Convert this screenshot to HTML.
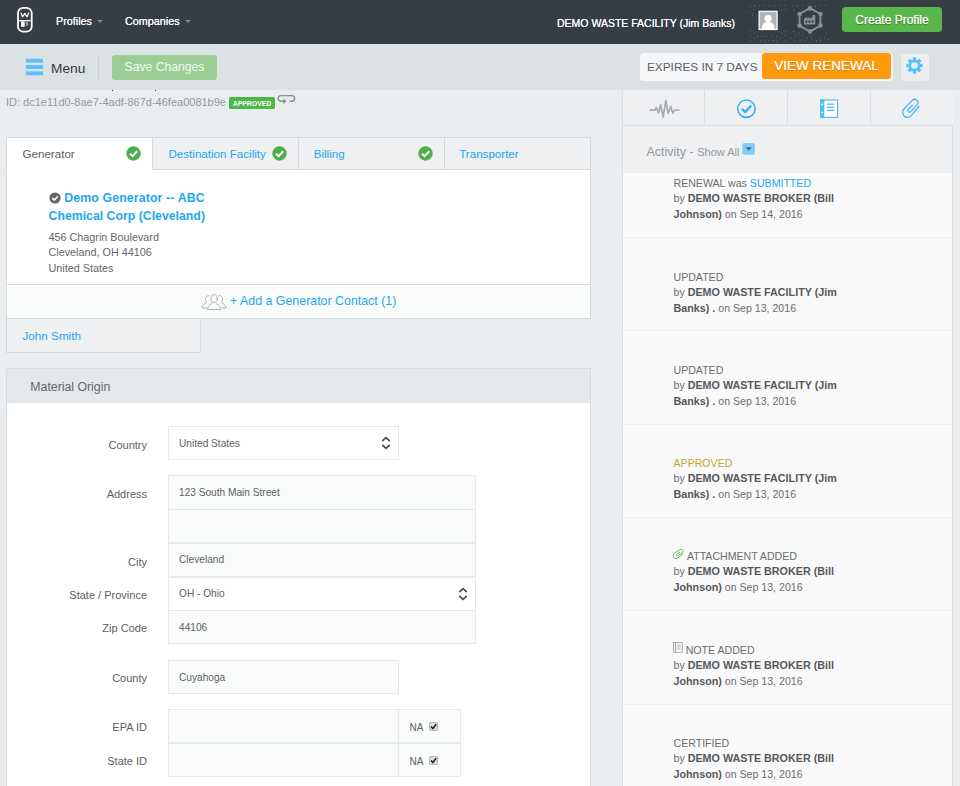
<!DOCTYPE html>
<html lang="en">
<head>
<meta charset="utf-8">
<title>Profile</title>
<style>
*{box-sizing:border-box;margin:0;padding:0}
html,body{width:960px;height:786px;overflow:hidden}
body{background:#e9edf0;font-family:"Liberation Sans",Arial,sans-serif;font-size:12px;color:#5a5f63;position:relative}
.abs{position:absolute}
a{color:#22a7f0;text-decoration:none}
/* top nav */
#nav{position:absolute;left:0;top:0;width:960px;height:44px;background:#363d45}
#nav .item{position:absolute;top:14px;color:#fff;font-size:10.8px;line-height:14px;text-shadow:0 0 0.6px #fff;white-space:nowrap}
#nav .caret{display:inline-block;width:0;height:0;border-left:3px solid transparent;border-right:3px solid transparent;border-top:3px solid #7d858b;margin-left:5px;vertical-align:2px}
#create{position:absolute;left:842px;top:7px;width:100px;height:25px;background:#58b64a;border-radius:3.500px;color:#fff;font-size:12px;line-height:26px;text-align:center;text-shadow:0 1px 1px rgba(0,0,0,0.3),0 0 0.6px #fff}
/* toolbar */
#bar{position:absolute;left:0;top:44px;width:960px;height:46px;background:#dce1e4}
#menu{position:absolute;left:51px;top:16px;font-size:13.7px;line-height:17px;color:#33383c}
#save{position:absolute;left:112px;top:11px;width:105px;height:25px;background:#9bce93;border-radius:3px;color:#f4f9f3;font-size:12.2px;line-height:25.500px;text-align:center}
#exp{position:absolute;left:639.500px;top:9px;width:253px;height:28px;background:#f5f6f7;border-radius:4px}
#exp span{position:absolute;left:7.500px;top:7px;font-size:11.8px;line-height:14px;color:#5b6063;white-space:nowrap}
#view{position:absolute;left:762px;top:53px;width:129px;height:26px;background:#ff9a0d;border-radius:3px;color:#fff;font-size:13.5px;line-height:26.200px;text-align:center;text-shadow:0 1px 1px rgba(0,0,0,0.2),0 0 0.6px #fff}
#gear{position:absolute;left:901px;top:53.500px;width:28px;height:27px;background:#ecedee;border-radius:2px}
/* left */
#idline{position:absolute;left:6px;top:96px;font-size:11px;line-height:13px;color:#999;white-space:nowrap}
.badge{position:absolute;left:229px;top:97.300px;width:46px;height:11.600px;background:#4db748;border-radius:1.500px;color:#fff;font-size:6.9px;font-weight:bold;line-height:13.200px;text-align:center}
.panel{position:absolute;background:#fff;border:1px solid #d6dadd}
.tab{position:absolute;top:137px;height:33px;width:147px;background:#eef0f2;border:1px solid #d6dadd;font-size:11.6px;line-height:14px;padding:9.200px 0 0 15.500px;color:#22a7f0}
.tab.on{background:#fff;border-bottom-color:#fff;color:#5a5f63}
.chk{position:absolute;top:8px;width:15px;height:15px}
h3{position:absolute;left:48.500px;top:190px;font-size:12.3px;line-height:17.5px;font-weight:bold;color:#22a7f0;white-space:nowrap}
.addr{position:absolute;left:48.500px;top:230px;font-size:10.8px;line-height:15.3px;color:#63676a;white-space:nowrap}
#addc{position:absolute;left:6px;top:284px;width:585px;height:35px;background:#fafcfc;border:1px solid #d6dadd}
#addc span{position:absolute;left:223px;top:8.500px;font-size:12.4px;line-height:15px;color:#22a7f0;white-space:nowrap}
#john{position:absolute;left:6px;top:319px;width:195px;height:33.500px;background:#eef0f2;border:1px solid #d6dadd;border-top:none;font-size:11.7px;line-height:14px;padding:9.700px 0 0 15.500px;color:#22a7f0}
#mo{position:absolute;left:6px;top:368px;width:585px;height:430px;background:#fff;border:1px solid #d9dcdf}
#mo .hd{height:34px;background:#e4e8ea;font-size:12.3px;line-height:15px;padding:11px 0 0 23.300px;color:#63676a}
.lbl{position:absolute;left:20px;width:127px;text-align:right;font-size:11px;line-height:13px;color:#5a5f63;white-space:nowrap}
.inp{position:absolute;left:168px;height:34px;background:#fafcfc;border:1px solid #e6e9eb;font-size:10.15px;line-height:12px;padding:10.700px 0 0 10px;color:#5a5f63;white-space:nowrap}
.inp.sel{background:#fff}
.na{position:absolute;left:398px;width:63px;height:34px;background:#fafcfc;border:1px solid #e6e9eb;font-size:10px;line-height:12px;padding:11.600px 0 0 10.600px;color:#5a5f63}
.cb{position:absolute;left:31px;top:12px;width:8px;height:8px;border:1px solid #9a9a9a;border-radius:1.5px;background:#f2f2f2}
/* right */
#rp{position:absolute;left:622px;top:90px;width:331px;height:700px;background:#f9f9f9;border-left:1px solid #dcdfe2;border-right:1px solid #d9dcdf}
.rt{position:absolute;top:90px;height:36px;background:#eff0f2;border:1px solid #dcdfe2;border-top:none}
#act{position:absolute;left:623px;top:125px;width:329px;height:48px;background:#eef0f2;border-top:1px solid #dde0e3}
#act span.a{position:absolute;left:23.500px;top:19px;font-size:12.5px;line-height:14px;color:#94989b;white-space:nowrap}
.it{position:absolute;left:673.500px;font-size:10.6px;line-height:15.4px;color:#6a6d70;white-space:nowrap;margin-top:0.8px}
.it b{color:#55585b;font-size:10.75px}
.sep{position:absolute;left:623px;width:329px;height:1px;background:#eceef0}
</style>
</head>
<body>
<div id="nav">
  <svg class="abs" style="left:17px;top:6.500px" width="16" height="26" viewBox="0 0 16 26"><rect x="1" y="0.900" width="13.700" height="23.800" rx="5.200" fill="none" stroke="#fff" stroke-width="1.800"/><path d="M3.900 5.600 L5.500 9.800 L7.800 6.300 L10.100 9.800 L11.800 5.600" fill="none" stroke="#fff" stroke-width="1.200" stroke-linejoin="round"/><path d="M2 13.700 H13.700" stroke="#fff" stroke-width="1.300"/><rect x="4.100" y="14.200" width="3.600" height="5.700" rx="0.600" fill="#fff"/><rect x="8.700" y="14.800" width="2.300" height="4" fill="#9ba0a4"/></svg>
  <div class="item" style="left:56px">Profiles<i class="caret"></i></div>
  <div class="item" style="left:125px">Companies<i class="caret"></i></div>
  <div class="item" style="left:557px;top:16px;font-size:10.5px">DEMO WASTE FACILITY (Jim Banks)</div>
  <svg class="abs" style="left:758px;top:10px" width="21" height="21" viewBox="0 0 21 21"><rect x="1.100" y="1.300" width="18" height="18.200" fill="#b4b5b6" stroke="#fff" stroke-width="1.200"/><circle cx="10.100" cy="8.600" r="3.600" fill="#fff"/><path d="M3.800 19 C3.800 13.500 6.500 12 10.100 12 C13.700 12 16.400 13.500 16.400 19 Z" fill="#fff"/></svg>
  <svg class="abs" style="left:796px;top:6px" width="28" height="28" viewBox="0 0 28 28"><g fill="none" stroke="#8b8f92" stroke-width="1.900"><polygon points="14,2.200 24.400,8 24.400,19.600 14,25.600 3.600,19.600 3.600,8"/></g><g fill="#8b8f92"><circle cx="14" cy="2.400" r="2.300"/><circle cx="24.400" cy="8" r="2.300"/><circle cx="24.400" cy="19.600" r="2.300"/><circle cx="14" cy="25.400" r="2.300"/><circle cx="3.600" cy="19.600" r="2.300"/><circle cx="3.600" cy="8" r="2.300"/><path d="M8 18.500 V12.500 L11 11.200 V12.500 L14 11.200 V12.500 L16.500 11.200 V9 H19.200 V18.500 Z"/></g><g fill="#343b41"><rect x="9.500" y="14.500" width="1.700" height="2.200"/><rect x="12.600" y="14.500" width="1.700" height="2.200"/><rect x="15.700" y="14.500" width="1.700" height="2.200"/></g></svg>
  <svg class="abs" style="left:0;top:0" width="960" height="44" viewBox="0 0 960 44"><g fill="#66645f"><rect x="753.9" y="4.9" width="1.100" height="1.100"/><rect x="759.0" y="4.9" width="1.100" height="1.100"/><rect x="764.0" y="4.9" width="1.100" height="1.100"/><rect x="769.1" y="4.9" width="1.100" height="1.100"/><rect x="774.0" y="4.9" width="1.100" height="1.100"/><rect x="779.0" y="4.9" width="1.100" height="1.100"/><rect x="783.9" y="4.9" width="1.100" height="1.100"/><rect x="797.0" y="4.9" width="1.100" height="1.100"/><rect x="801.9" y="4.9" width="1.100" height="1.100"/><rect x="819.9" y="4.9" width="1.100" height="1.100"/><rect x="824.9" y="4.9" width="1.100" height="1.100"/><rect x="749.9" y="5.9" width="1.100" height="1.100"/><rect x="791.8" y="5.9" width="1.100" height="1.100"/><rect x="814.8" y="5.9" width="1.100" height="1.100"/><rect x="752.9" y="8.9" width="1.100" height="1.100"/><rect x="785.0" y="8.9" width="1.100" height="1.100"/><rect x="781.1" y="9.8" width="1.100" height="1.100"/><rect x="793.9" y="9.8" width="1.100" height="1.100"/><rect x="749.0" y="10.9" width="1.100" height="1.100"/><rect x="752.0" y="14.7" width="1.100" height="1.100"/><rect x="749.9" y="30.0" width="1.100" height="1.100"/><rect x="753.9" y="32.8" width="1.100" height="1.100"/><rect x="781.1" y="32.8" width="1.100" height="1.100"/><rect x="798.9" y="32.8" width="1.100" height="1.100"/><rect x="826.0" y="32.8" width="1.100" height="1.100"/><rect x="785.0" y="30.9" width="1.100" height="1.100"/><rect x="793.0" y="30.9" width="1.100" height="1.100"/><rect x="749.9" y="34.9" width="1.100" height="1.100"/><rect x="783.9" y="34.9" width="1.100" height="1.100"/><rect x="801.9" y="34.9" width="1.100" height="1.100"/><rect x="795.1" y="34.9" width="1.100" height="1.100"/><rect x="756.9" y="35.9" width="1.100" height="1.100"/><rect x="761.8" y="35.9" width="1.100" height="1.100"/><rect x="766.1" y="35.9" width="1.100" height="1.100"/><rect x="771.0" y="35.9" width="1.100" height="1.100"/><rect x="775.9" y="35.9" width="1.100" height="1.100"/><rect x="753.9" y="37.5" width="1.100" height="1.100"/><rect x="779.9" y="37.5" width="1.100" height="1.100"/><rect x="790.9" y="37.5" width="1.100" height="1.100"/><rect x="806.8" y="37.5" width="1.100" height="1.100"/><rect x="810.9" y="37.5" width="1.100" height="1.100"/><rect x="819.9" y="37.5" width="1.100" height="1.100"/><rect x="824.0" y="37.5" width="1.100" height="1.100"/><rect x="749.9" y="39.8" width="1.100" height="1.100"/><rect x="760.0" y="39.8" width="1.100" height="1.100"/><rect x="767.9" y="39.8" width="1.100" height="1.100"/><rect x="773.1" y="39.8" width="1.100" height="1.100"/><rect x="785.0" y="39.8" width="1.100" height="1.100"/><rect x="793.9" y="39.8" width="1.100" height="1.100"/><rect x="799.8" y="39.8" width="1.100" height="1.100"/><rect x="803.8" y="39.8" width="1.100" height="1.100"/><rect x="815.9" y="39.8" width="1.100" height="1.100"/><rect x="819.9" y="39.8" width="1.100" height="1.100"/><rect x="827.0" y="38.9" width="1.100" height="1.100"/><rect x="764.0" y="40.7" width="1.100" height="1.100"/><rect x="776.8" y="40.7" width="1.100" height="1.100"/><rect x="815.9" y="40.7" width="1.100" height="1.100"/><rect x="756.9" y="41.9" width="1.100" height="1.100"/><rect x="776.8" y="41.9" width="1.100" height="1.100"/><rect x="809.0" y="41.9" width="1.100" height="1.100"/></g></svg>
  <div id="create">Create Profile</div>
</div>
<div id="bar">
  <svg class="abs" style="left:25.600px;top:14.400px" width="17.500" height="18" viewBox="0 0 18 18"><rect x="0" y="0.500" width="18" height="4" fill="#5bc0fa"/><rect x="0" y="7" width="18" height="4" fill="#5bc0fa"/><rect x="0" y="13.500" width="18" height="4" fill="#5bc0fa"/></svg>
  <div id="menu">Menu</div>
  <div class="abs" style="left:98px;top:12px;width:1px;height:24px;background:#c9ced2"></div>
  <div id="save">Save Changes</div>
  <div id="exp"><span>EXPIRES IN 7 DAYS</span></div>
</div>
<div id="view">VIEW RENEWAL</div>
<div id="gear"><svg class="abs" style="left:5.400px;top:3px" width="17" height="17" viewBox="0 0 16 16"><g fill="#5cc0fb"><circle cx="8" cy="8" r="5.700"/><rect x="6.400" y="0.300" width="3.200" height="15.400" rx="0.700"/><rect x="6.400" y="0.300" width="3.200" height="15.400" rx="0.700" transform="rotate(45 8 8)"/><rect x="6.400" y="0.300" width="3.200" height="15.400" rx="0.700" transform="rotate(90 8 8)"/><rect x="6.400" y="0.300" width="3.200" height="15.400" rx="0.700" transform="rotate(135 8 8)"/></g><circle cx="8" cy="8" r="3.100" fill="#ecedee"/></svg></div>

<div class="abs" style="left:111.500px;top:89.800px;width:1.600px;height:1.400px;background:#3a3a3a"></div><div class="abs" style="left:154.500px;top:89.800px;width:1.600px;height:1.400px;background:#3a3a3a"></div>
<div id="idline">ID: dc1e11d0-8ae7-4adf-867d-46fea0081b9e</div>
<div class="badge">APPROVED</div>
<svg class="abs" style="left:277px;top:94px" width="19" height="12" viewBox="0 0 19 12"><path d="M7.800 7.300 H4 C0.200 7.300 0.200 1.600 4 1.600 H14.800 C18.600 1.600 18.600 7.300 14.800 7.300 H12.600" fill="none" stroke="#8a8e91" stroke-width="1.400"/><path d="M6.300 4.600 L9.600 7.300 L6.300 10 Z" fill="#8a8e91"/></svg>

<div class="panel" style="left:6px;top:137px;width:585px;height:148px"></div>
<div class="tab on" style="left:6px">Generator<svg class="chk" style="left:119px" viewBox="0 0 15 15"><circle cx="7.500" cy="7.500" r="7.200" fill="#4cae4c"/><path d="M4 7.700 L6.600 10.200 L11.200 5.300" fill="none" stroke="#fff" stroke-width="2"/></svg></div>
<div class="tab" style="left:152px">Destination Facility<svg class="chk" style="left:119px" viewBox="0 0 15 15"><circle cx="7.500" cy="7.500" r="7.200" fill="#4cae4c"/><path d="M4 7.700 L6.600 10.200 L11.200 5.300" fill="none" stroke="#fff" stroke-width="2"/></svg></div>
<div class="tab" style="left:298px;padding-left:14.700px">Billing<svg class="chk" style="left:119px" viewBox="0 0 15 15"><circle cx="7.500" cy="7.500" r="7.200" fill="#4cae4c"/><path d="M4 7.700 L6.600 10.200 L11.200 5.300" fill="none" stroke="#fff" stroke-width="2"/></svg></div>
<div class="tab" style="left:444px;width:147px;padding-left:14.200px">Transporter</div>
<svg class="abs" style="left:49px;top:192px" width="12" height="12" viewBox="0 0 12 12"><circle cx="6" cy="6" r="5.600" fill="#63676a"/><path d="M3.200 6.200 L5.300 8.100 L8.900 4.300" fill="none" stroke="#fff" stroke-width="1.600"/></svg>
<h3><span style="display:inline-block;width:15.700px"></span><span style="letter-spacing:0.140px">Demo Generator -- ABC</span><br>Chemical Corp (Cleveland)</h3>
<div class="addr">456 Chagrin Boulevard<br>Cleveland, OH 44106<br>United States</div>
<div id="addc"><svg class="abs" style="left:194px;top:8.200px" width="27" height="18" viewBox="0 0 27 18"><g fill="none" stroke="#a9acae" stroke-width="0.900" stroke-linecap="round"><ellipse cx="13" cy="5.600" rx="3.300" ry="4"/><path d="M6.600 16.600 C6.600 13 8 12.200 10.800 10.600 M15.200 10.600 C18 12.200 19.400 13 19.400 16.600 M6.600 16.600 H19.400"/><path d="M8 2.600 C5 2.200 3.600 5.400 5 8.200 C5.400 9 5.600 9.600 5 10 C3 11 1.200 12 1 15 H5.500"/><path d="M18 2.600 C21 2.200 22.400 5.400 21 8.200 C20.600 9 20.400 9.600 21 10 C23 11 24.800 12 25 15 H20.500"/></g></svg><span>+ Add a Generator Contact (1)</span></div>
<div id="john">John Smith</div>

<div id="mo"><div class="hd">Material Origin</div></div>
<div class="lbl" style="top:438.9px">Country</div>
<div class="inp sel" style="top:426.0px;width:231px">United States<svg class="abs" style="right:7.300px;top:9.300px" width="10" height="14" viewBox="0 0 10 14"><path d="M1.300 5 L5 1.700 L8.700 5 M1.300 9 L5 12.300 L8.700 9" fill="none" stroke="#4a4e51" stroke-width="1.700"/></svg></div>
<div class="lbl" style="top:488.3px">Address</div>
<div class="inp" style="top:475px;width:308px;height:35px">123 South Main Street</div>
<div class="inp" style="top:509px;width:308px"></div>
<div class="lbl" style="top:555.9px">City</div>
<div class="inp" style="top:543px;width:308px;padding-top:10px">Cleveland</div>
<div class="lbl" style="top:589.3px">State / Province</div>
<div class="inp sel" style="top:577px;width:308px;padding-top:10px">OH - Ohio<svg class="abs" style="right:7.300px;top:9.300px" width="10" height="14" viewBox="0 0 10 14"><path d="M1.300 5 L5 1.700 L8.700 5 M1.300 9 L5 12.300 L8.700 9" fill="none" stroke="#4a4e51" stroke-width="1.700"/></svg></div>
<div class="lbl" style="top:622.3px">Zip Code</div>
<div class="inp" style="top:610px;width:308px">44106</div>
<div class="lbl" style="top:672.3px">County</div>
<div class="inp" style="top:660.0px;width:231px">Cuyahoga</div>
<div class="lbl" style="top:721.3px">EPA ID</div>
<div class="inp" style="top:709px;width:231px"></div>
<div class="na" style="top:709px">NA<svg class="abs" style="left:30.300px;top:12.300px" width="9" height="9" viewBox="0 0 9 9"><rect x="0.400" y="0.400" width="8.200" height="8.200" rx="1.600" fill="#dcdcdc" stroke="#a3a3a3" stroke-width="0.800"/><path d="M2 4.600 L3.800 6.500 L7.200 2.200" fill="none" stroke="#222" stroke-width="1.500"/></svg></div>
<div class="lbl" style="top:755.3px">State ID</div>
<div class="inp" style="top:743px;width:231px"></div>
<div class="na" style="top:743px">NA<svg class="abs" style="left:30.300px;top:12.300px" width="9" height="9" viewBox="0 0 9 9"><rect x="0.400" y="0.400" width="8.200" height="8.200" rx="1.600" fill="#dcdcdc" stroke="#a3a3a3" stroke-width="0.800"/><path d="M2 4.600 L3.800 6.500 L7.200 2.200" fill="none" stroke="#222" stroke-width="1.500"/></svg></div>

<div id="rp"></div>
<div class="rt" style="left:622px;width:83px"></div>
<div class="rt" style="left:704px;width:84px"></div>
<div class="rt" style="left:787px;width:84px"></div>
<div class="rt" style="left:870px;width:83px;border-right:none"></div>
<svg class="abs" style="left:649px;top:99px" width="32" height="20" viewBox="0 -1 32 20"><path d="M1.200 10.200 H6.100 L7.400 7.400 L9.500 12.800 L11.600 4.800 L14.200 17 L16.800 0.300 L19.100 13.400 L21.700 6.300 L23.800 13.100 L25.600 10.200 H30" fill="none" stroke="#aaadb0" stroke-width="1.700" stroke-linejoin="round" stroke-linecap="round"/></svg>
<svg class="abs" style="left:736px;top:98px" width="21" height="21" viewBox="0 0 21 21"><circle cx="10.400" cy="10.700" r="8.700" fill="none" stroke="#39b0f5" stroke-width="1.600"/><path d="M5.800 10.800 L9.200 13.900 L15.200 7.600" fill="none" stroke="#39b0f5" stroke-width="2.500"/></svg>
<svg class="abs" style="left:820px;top:99px" width="19" height="19" viewBox="0 0 19 19"><rect x="0.600" y="1" width="17" height="17.400" fill="#fff" stroke="#52baf8" stroke-width="1.200"/><rect x="0" y="0.400" width="4.300" height="18.600" fill="#52baf8"/><circle cx="2.200" cy="5.400" r="0.800" fill="#fff"/><circle cx="2.200" cy="13.400" r="0.800" fill="#fff"/><path d="M7 5.200 H14.300 M7 8.300 H14.300 M7 11.400 H14.300" stroke="#52baf8" stroke-width="1.300"/></svg>
<svg class="abs" style="left:895px;top:93px" width="32" height="30" viewBox="0 0 32 30"><path d="M23.850,13.550 L16.200,22.600 C13.500,25.600 9.200,24.600 8,21 C7.200,18.800 7.800,17 8.900,15.900 L17.200,7.400 C19.500,5.200 23.200,6.600 23,9.600 C22.900,10.600 22.500,11.300 21.900,11.900 L16,18.300 C14.800,19.600 12.900,19.200 12.800,17.500 C12.800,16.800 13,16.400 13.400,16 L17.400,12.200" fill="none" stroke="#4ab8f8" stroke-width="1.350" stroke-linecap="round"/></svg>
<div id="act"><span class="a">Activity - <span style="font-size:11px">Show All</span></span><svg class="abs" style="left:119px;top:17px" width="14" height="13" viewBox="0 0 14 13"><rect x="0.300" y="0" width="12.600" height="11.800" rx="2.600" fill="#7fcbfb"/><path d="M3.300 4.300 H9.900 L6.600 7.600 Z" fill="#5a5a5a"/></svg></div>

<div class="it" style="top:175px">RENEWAL was <a>SUBMITTED</a><br>by <b>DEMO WASTE BROKER (Bill</b><br><b>Johnson)</b> on Sep 14, 2016</div>
<div class="sep" style="top:237px"></div>
<div class="it" style="top:269px">UPDATED<br>by <b>DEMO WASTE FACILITY (Jim</b><br><b>Banks) .</b> on Sep 13, 2016</div>
<div class="sep" style="top:330px"></div>
<div class="it" style="top:362px">UPDATED<br>by <b>DEMO WASTE FACILITY (Jim</b><br><b>Banks) .</b> on Sep 13, 2016</div>
<div class="sep" style="top:424px"></div>
<div class="it" style="top:455px"><span style="color:#c4a631">APPROVED</span><br>by <b>DEMO WASTE FACILITY (Jim</b><br><b>Banks) .</b> on Sep 13, 2016</div>
<div class="sep" style="top:517px"></div>
<div class="it" style="top:548px"><svg style="position:absolute;left:-2px;top:-0.600px" width="13" height="12" viewBox="6 5 20 21"><path d="M23.850,13.550 L16.200,22.600 C13.500,25.600 9.200,24.600 8,21 C7.200,18.800 7.800,17 8.900,15.900 L17.200,7.400 C19.500,5.200 23.200,6.600 23,9.600 C22.900,10.600 22.500,11.300 21.900,11.900 L16,18.300 C14.800,19.600 12.900,19.200 12.800,17.500 C12.800,16.800 13,16.400 13.400,16 L17.400,12.200" fill="none" stroke="#5cb85c" stroke-width="1.600" stroke-linecap="round" transform="rotate(12 16 15)"/></svg><span style="display:inline-block;width:13.400px"></span>ATTACHMENT ADDED<br>by <b>DEMO WASTE BROKER (Bill</b><br><b>Johnson)</b> on Sep 13, 2016</div>
<div class="sep" style="top:610px"></div>
<div class="it" style="top:642px"><svg style="position:absolute;left:-0.200px;top:-0.600px" width="10" height="11" viewBox="0 0 10 11"><rect x="0.500" y="0.500" width="8.800" height="9.800" fill="#fdfdfd" stroke="#a2a5a7" stroke-width="0.900"/><path d="M2.500 0.500 V10.300" stroke="#a2a5a7" stroke-width="1.200"/><path d="M4.200 3 H7.800 M4.200 5 H7.800 M4.200 7 H7.800" stroke="#a2a5a7" stroke-width="0.800"/></svg><span style="display:inline-block;width:12.200px"></span>NOTE ADDED<br>by <b>DEMO WASTE BROKER (Bill</b><br><b>Johnson)</b> on Sep 13, 2016</div>
<div class="sep" style="top:704px"></div>
<div class="it" style="top:735px">CERTIFIED<br>by <b>DEMO WASTE BROKER (Bill</b><br><b>Johnson)</b> on Sep 13, 2016</div>
</body>
</html>
